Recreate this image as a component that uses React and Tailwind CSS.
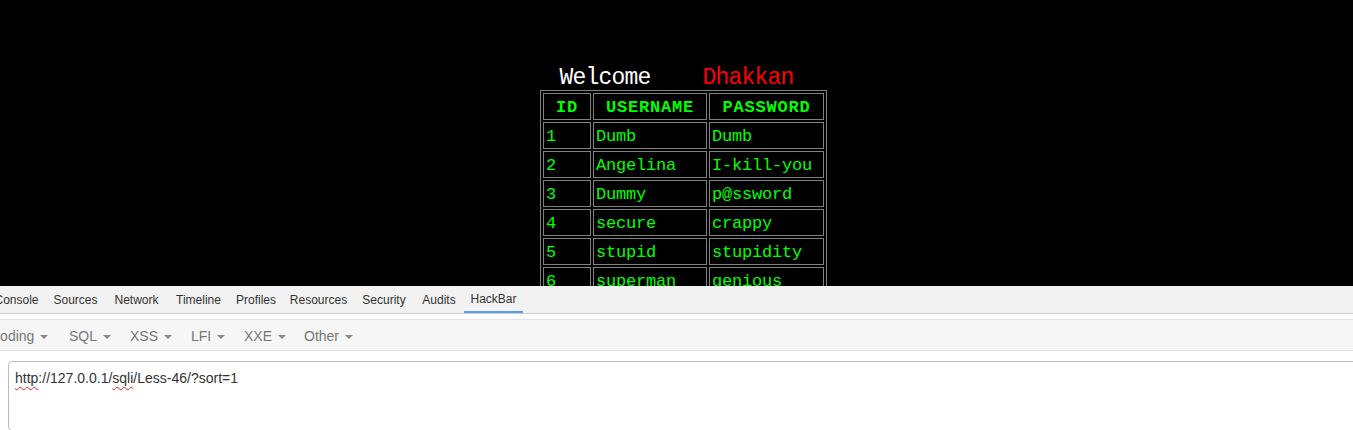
import React from "react";

const rows = [
  ["1", "Dumb", "Dumb"],
  ["2", "Angelina", "I-kill-you"],
  ["3", "Dummy", "p@ssword"],
  ["4", "secure", "crappy"],
  ["5", "stupid", "stupidity"],
  ["6", "superman", "genious"],
  ["7", "batman", "mob!le"],
  ["8", "admin", "admin"],
];

const tabs = [
  ["Console", "w-[59px] -ml-[13px]"],
  ["Sources", "w-[59px]"],
  ["Network", "w-[63px]"],
  ["Timeline", "w-[61px]"],
  ["Profiles", "w-[54px]"],
  ["Resources", "w-[71px]"],
  ["Security", "w-[60px]"],
  ["Audits", "w-[50px]"],
  ["HackBar", "w-[59px]"],
];

const menus = [
  ["Encoding", "w-[93px] -ml-[34px]"],
  ["SQL", "w-[61px]"],
  ["XSS", "w-[61px]"],
  ["LFI", "w-[53px]"],
  ["XXE", "w-[60px]"],
  ["Other", "w-[70px]"],
];

export default function App() {
  return (
    <div className="w-[1353px] h-[430px] overflow-hidden flex flex-col bg-white">
      {/* page area */}
      <div className="h-[286px] shrink-0 bg-black overflow-hidden flex flex-col pt-[66px]">
        <div
          className="h-[24px] text-center whitespace-pre text-[23px] leading-[24px] tracking-[-0.8px] text-white"
          style={{ fontFamily: '"Liberation Mono", monospace' }}
        >
          Welcome    <span className="text-[#ff0000]">Dhakkan</span>
        </div>
        <div
          className="ml-[540px] w-[287px] border border-[#808080] p-[2px] grid grid-cols-[48px_114px_115px] gap-[2px] text-[#00ff00]"
          style={{ fontFamily: '"Liberation Mono", monospace' }}
        >
          {["ID", "USERNAME", "PASSWORD"].map((h) => (
            <div
              key={h}
              className="h-[27px] border border-[#808080] pt-[3px] text-center font-bold text-[17px] leading-[22px] tracking-[0.8px]"
            >
              {h}
            </div>
          ))}
          {rows.map((r) =>
            r.map((c, i) => (
              <div
                key={r[0] + i}
                className="h-[27px] border border-[#808080] pt-[3px] pl-[2px] text-[17px] leading-[22px] tracking-[-0.2px] whitespace-nowrap"
              >
                {c}
              </div>
            ))
          )}
        </div>
      </div>

      {/* devtools */}
      <div
        className="flex-1 flex flex-col"
        style={{ fontFamily: '"Liberation Sans", Arial, sans-serif' }}
      >
        <div className="h-[28px] shrink-0 bg-[#f2f2f2] border-b border-[#cccccc] flex items-stretch">
          {tabs.map(([t, cls]) => (
            <div
              key={t}
              className={`${cls} shrink-0 flex items-center justify-center text-[12px] text-[#333333] ${
                t === "HackBar" ? "border-b-2 border-[#5b9cf0] pt-[1px]" : "pt-[1px]"
              }`}
            >
              {t}
            </div>
          ))}
        </div>
        <div className="h-[5px] shrink-0 bg-white" />
        <div className="h-[32px] shrink-0 bg-[#f6f6f6] border-t border-b border-[#e3e3e3] flex items-center">
          {menus.map(([m, cls]) => (
            <div
              key={m}
              className={`${cls} shrink-0 flex items-center px-[10px] text-[14px] text-[#777777] pt-[2px]`}
            >
              <span>{m}</span>
              <span className="ml-[6px] mt-[1px] w-0 h-0 border-t-[4px] border-t-[#888888] border-x-[4px] border-x-transparent" />
            </div>
          ))}
        </div>
        <div className="h-[10px] shrink-0 bg-white" />
        <div className="ml-[8px] w-[1400px] h-[70px] border border-[#bbbbbb] rounded-[4px] pl-[6px] pt-[6px] text-[14px] leading-[20px] text-[#333333]">
          <span className="underline decoration-wavy decoration-[#e02020] decoration-1 underline-offset-[3px]">http</span>
          ://127.0.0.1/
          <span className="underline decoration-wavy decoration-[#e02020] decoration-1 underline-offset-[3px]">sqli</span>
          /Less-46/?sort=1
        </div>
      </div>
    </div>
  );
}
